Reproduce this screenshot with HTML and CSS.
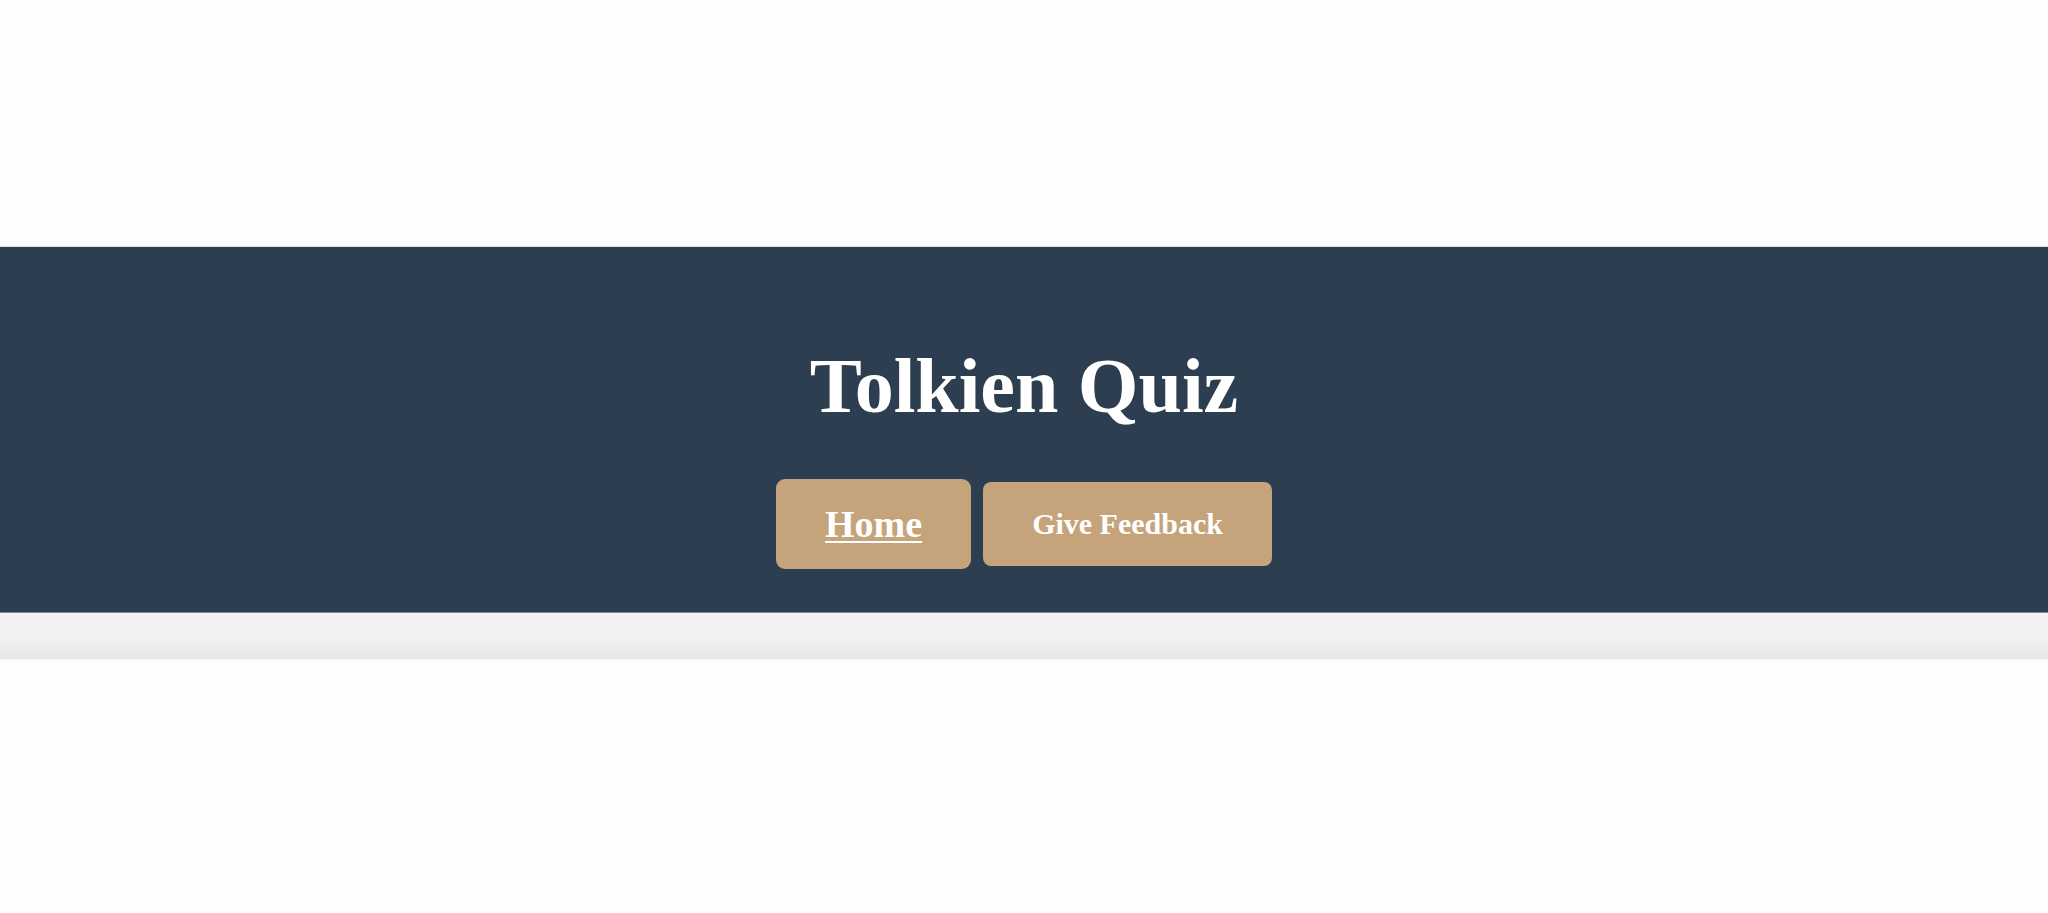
FILE: index.html
```html
<!DOCTYPE html>
<html lang="en">
<head>
<meta charset="utf-8">
<title>Tolkien Quiz</title>
<link rel="stylesheet" href="styles.css">
</head>
<body>
<div class="page">
  <header class="site-header">
    <h1 class="title">Tolkien Quiz</h1>
    <nav class="nav">
      <a class="nav-btn nav-btn--active" href="#">Home</a>
      <a class="nav-btn" href="#">Give Feedback</a>
    </nav>
  </header>
  <div class="subbar"></div>
</div>
</body>
</html>
```
FILE: styles.css
```css
html, body {
  margin: 0;
  padding: 0;
  background: #fefefe;
}
body {
  font-family: "Liberation Serif", "Times New Roman", serif;
}
.page {
  padding-top: 247px;
}
.site-header {
  background: #2d3e50;
  height: 366px;
  box-sizing: border-box;
  padding-top: 94px;
  display: flex;
  flex-direction: column;
  align-items: center;
  box-shadow: 0 -1px 1px rgba(0,0,0,0.12);
  border-bottom: 1px solid #7f8c99;
}
.title {
  margin: 0;
  font-size: 78px;
  line-height: 90px;
  font-weight: bold;
  color: #ffffff;
}
.nav {
  margin-top: 48px;
  display: flex;
  align-items: center;
  gap: 12px;
}
.nav-btn {
  display: block;
  background: #c5a37b;
  color: #ffffff;
  font-weight: bold;
  font-size: 30px;
  line-height: 34px;
  padding: 25px 49px;
  border-radius: 8px;
  text-decoration: none;
}
.nav-btn--active {
  font-size: 38px;
  line-height: 44px;
  padding: 23px 49px;
  border-radius: 9px;
  text-decoration: underline;
  text-decoration-thickness: 2px;
  text-underline-offset: 4px;
}
.subbar {
  height: 46px;
  background: linear-gradient(#f3f3f3 0%, #f2f2f2 55%, #e7e7e7 100%);
  border-bottom: 1px solid #f6f6f6;
}
```
